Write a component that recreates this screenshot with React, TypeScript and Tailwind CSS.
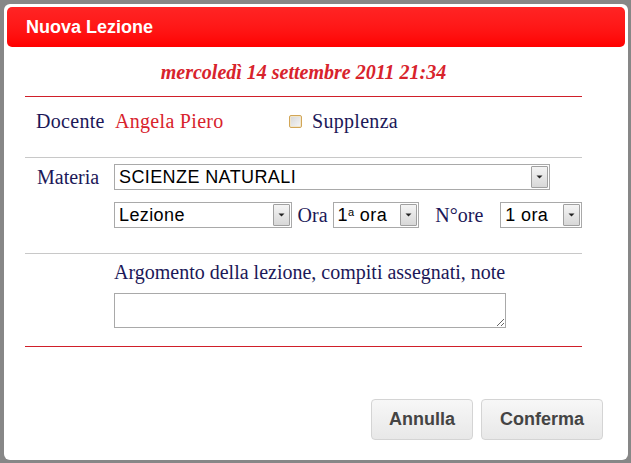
import React from 'react';

const Select = ({ value, className }: { value: React.ReactNode; className: string }) => (
  <div className={`flex items-stretch h-[26px] border border-[#a9a9a9] bg-white ${className}`}>
    <div className="flex-1 flex items-center pl-[4px] text-[18px] tracking-[0.4px] leading-none text-black font-['Liberation_Sans',Arial,sans-serif]">
      {value}
    </div>
    <div className="w-[17px] my-[1px] mr-[1px] border border-[#a0a0a0] rounded-[1px] bg-gradient-to-b from-[#f4f4f4] to-[#d8d8d8] flex items-center justify-center">
      <svg width="7" height="4" viewBox="0 0 7 4">
        <path d="M0.5 0.5 L6.5 0.5 L3.5 3.5 Z" fill="#222" />
      </svg>
    </div>
  </div>
);

const RedLine = () => <div className="h-px bg-[#d01f2a]" />;
const GrayLine = () => <div className="h-px bg-[#c8c8c8]" />;

const serif = "font-['Liberation_Serif','Times_New_Roman',serif]";

export default function App() {
  return (
    <div className="w-[631px] h-[463px] bg-[#878787] pt-[4px] pl-[4px] overflow-hidden">
      <div className="w-[624px] h-[456px] bg-white rounded-[6px] p-[3px] flex flex-col">
        {/* titolo */}
        <div className="h-[40px] rounded-[5px] bg-gradient-to-b from-[#ff2424] to-[#ff0000] flex items-center pl-[19px]">
          <span className="text-white font-bold text-[18px] font-['Liberation_Sans',Arial,sans-serif]">Nuova Lezione</span>
        </div>

        <div className={`ml-[18px] w-[557px] ${serif}`}>
          <div className="h-[49px] flex items-center justify-center pt-[1px]">
            <span className="italic font-bold text-[20px] text-[#d8232c]">mercoledì 14 settembre 2011 21:34</span>
          </div>
          <RedLine />

          <div className="h-[60px] flex items-center text-[20px] tracking-[0.3px] pb-[12px]">
            <span className="ml-[11px] w-[79px] text-[#1c1858]">Docente</span>
            <span className="w-[174px] text-[#d8232c]">Angela Piero</span>
            <span className="w-[13px] h-[13px] border border-[#d2a657] bg-gradient-to-br from-[#d6d6d6] to-[#f6f6f6] rounded-[2px] shadow-[inset_0_0_0_1px_#f1e6cc]" />
            <span className="ml-[10px] text-[#1c1858]">Supplenza</span>
          </div>
          <GrayLine />

          <div className="h-[95px] pt-[6px]">
            <div className="flex items-center h-[26px]">
              <span className="ml-[12px] w-[77px] text-[20px] leading-none text-[#1c1858]">Materia</span>
              <Select value="SCIENZE NATURALI" className="w-[436px]" />
            </div>
            <div className="flex items-center h-[26px] mt-[12px] ml-[89px]">
              <Select value="Lezione" className="w-[178px]" />
              <span className="ml-[6px] w-[35px] text-[20px] leading-none text-[#1c1858]">Ora</span>
              <Select
                value={
                  <span>
                    1<sup className="text-[11px] -top-[0.5em]">a</sup> ora
                  </span>
                }
                className="w-[87px]"
              />
              <span className="ml-[16px] w-[65px] text-[20px] leading-none text-[#1c1858]">N°ore</span>
              <Select value="1 ora" className="w-[82px]" />
            </div>
          </div>
          <GrayLine />

          <div className="h-[92px] pl-[89px] pt-[6px]">
            <div className="text-[20px] text-[#1c1858] leading-[24px]">Argomento della lezione, compiti assegnati, note</div>
            <textarea className="mt-[9px] w-[392px] h-[35px] border border-[#a9a9a9] block resize" />
          </div>
          <RedLine />
        </div>

        <div className="flex justify-end gap-[8px] mt-[52px] mr-[22px] font-['Liberation_Sans',Arial,sans-serif]">
          <button className="w-[102px] h-[41px] rounded-[4px] border border-[#d4d4d4] bg-gradient-to-b from-[#f7f7f7] to-[#e8e8e8] text-[18px] font-bold text-[#444]">
            Annulla
          </button>
          <button className="w-[122px] h-[41px] rounded-[4px] border border-[#d4d4d4] bg-gradient-to-b from-[#f7f7f7] to-[#e8e8e8] text-[18px] font-bold text-[#444]">
            Conferma
          </button>
        </div>
      </div>
    </div>
  );
}
